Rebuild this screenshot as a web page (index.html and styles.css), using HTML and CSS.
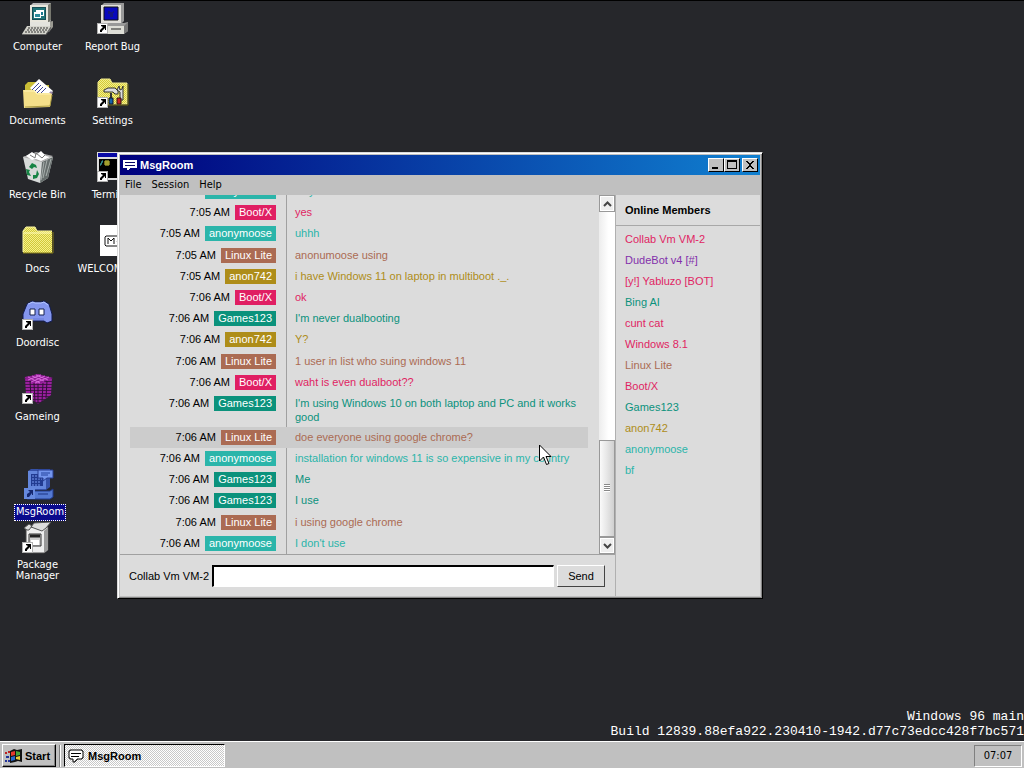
FILE: index.html
```html
<!DOCTYPE html>
<html lang="en">
<head>
<meta charset="utf-8">
<title>Windows 96</title>
<link rel="stylesheet" href="styles.css">
</head>
<body>
<svg class="defs" aria-hidden="true">
  <defs>
    <pattern id="weave" width="2" height="2" patternUnits="userSpaceOnUse"><rect width="2" height="2" fill="#f4f08a"/><path d="M0 0h1v1H0zM1 1h1v1H1z" fill="#d2c838"/></pattern>
    <pattern id="stripe" width="32" height="3" patternUnits="userSpaceOnUse"><rect width="32" height="3" fill="#4a1250"/><path d="M0 0h32v2H0z" fill="#9a1f9e"/></pattern>
    <symbol id="shortcut" viewBox="0 0 11 11"><path d="M0 0h11v11H0z" fill="#fff"/><path d="M0 0h11v11H0zM1 1v9h9V1z" fill="#b0b0b0" fill-rule="evenodd"/><path d="M4 2h5v5H8V5L6 7 5 8v1H3V7l3-3-2-1z" fill="#000"/></symbol>
    <symbol id="bubble" viewBox="0 0 16 14"><path d="M2 1h12v1h1v7h-1v1H9v1H8v1H7v1H5v-3H2V9H1V2h1z" fill="#fff" stroke="#000"/><path d="M3 4h10v1H3zM3 7h8v1H3z" fill="#000"/></symbol>
  </defs>
</svg>
<div class="screen">
  <main class="desktop">
    <nav class="icons" aria-label="Desktop">
      <a class="icon" href="#computer">
        <svg viewBox="0 0 32 32"><path d="M8 3l3-3h18v18l-3 3H8z" fill="#bdbdbd"/><path d="M8 2h18v18H8z" fill="#e8e6dc"/><path d="M26 2l3-2v17l-3 3z" fill="#77786f"/><path d="M10 4h14v13H10z" fill="#174e56"/><path d="M11 5h12v11H11z" fill="#1f7478"/><path d="M14 7h8v6h-8z" fill="#fff"/><path d="M15 9h6v3h-6z" fill="#1a7a90"/><path d="M12 9h7v6h-7z" fill="#fff"/><path d="M13 11h5v3h-5z" fill="#2a8a9a"/><path d="M8 19h18l5-1v6l-4 5H8z" fill="#9a9a92"/><path d="M8 19h20v4H8z" fill="#e3e3dd"/><path d="M5 23h24l-5 8H0z" fill="#d4d4cc"/><path d="M6 25h20M5 27h20M3 29h20" stroke="#343434" stroke-dasharray="2 1"/><path d="M0 31h24l5-8v3l-5 6H0z" fill="#666"/></svg>
        <span>Computer</span></a>
      <a class="icon" href="#documents">
        <svg viewBox="0 0 32 32"><path d="M3 8l3-3h8l2 3h11v17H3z" fill="#c9bd36"/><path d="M8 11l9-9 14 12-9 12z" fill="#fff"/><path d="M10 13l7-7M12 15l7-7M14 17l7-7M17 18l7-7" stroke="#414796"/><path d="M29 14l2 2-4 4v-4z" fill="#98a"/><path d="M1 13h11l3 3h13l2 1-2 13-26 1z" fill="#f4df89"/><path d="M2 14h10l3 3h13" fill="none" stroke="#fff4b5"/><path d="M3 30l25-1 2-11" fill="none" stroke="#ad9d42"/></svg>
        <span>Documents</span></a>
      <a class="icon" href="#recycle">
        <svg viewBox="0 0 32 32"><path d="M1 6l13-4 17 4-5 21-8 5-12-4z" fill="#d7dad9"/><path d="M20 11l11-5-5 21-8 5z" fill="#666d6c"/><path d="M22 11l-3 18M25 9l-4 18M29 8l-5 17" stroke="#a8afad"/><path d="M1 6l13-5 17 4-11 6z" fill="#aaa"/><path d="M4 5l6-4 4 3 5-4 5 5 4 1-9 4-5-2-4 1z" fill="#fff"/><path d="M8 4l5 3 1-5 6 5 3-3" fill="none" stroke="#777"/><path d="M7 16l3-4 4 2 1 3-3-1-2 2zM4 18l4 1-1 2 2 4-4-1zM11 24h3l1-5 2 4-2 4-4 1z" fill="#168344"/></svg>
        <span>Recycle Bin</span></a>
      <a class="icon" href="#docs">
        <svg viewBox="0 0 32 32"><path d="M1 6l3-4h9l2 4h15v22H1z" fill="url(#weave)"/><path d="M1 27V6l3-4h9l2 4h15" fill="none" stroke="#fbf7a5"/><path d="M2 8h27" stroke="#fffbb8"/><path d="M1 28h30V7" fill="none" stroke="#847b1c"/></svg>
        <span>Docs</span></a>
      <a class="icon" href="#doordisc">
        <svg viewBox="0 0 32 32"><path d="M5 5l5-3 3 1h6l3-1 5 3 3 10v7l-5 2-3-2H10l-4 2-5-2v-7z" fill="#8496ee" stroke="#111b50"/><path d="M6 5l5-2 2 1h6l3-1 4 3" fill="none" stroke="#b5c6ff"/><path d="M8 10h5v6H8zM17 10h5v6h-5z" fill="#fff" stroke="#152052"/><path d="M11 20h11" stroke="#6a7cd6"/><use href="#shortcut" y="20" width="11" height="11"/></svg>
        <span>Doordisc</span></a>
      <a class="icon" href="#gameing">
        <svg viewBox="0 0 32 32"><path d="M3 4l13-3 14 4-1 17-13 9L4 22z" fill="url(#stripe)"/><path d="M2 5l14-4 15 4-15 6z" fill="#8d1c92"/><path d="M6 4l12 6M10 3l12 5M14 2l12 5M27 4l-14 6M23 3L9 9M19 2L6 7" stroke="#d668da"/><path d="M16 11v20M12 10l1 19M8 8l1 16M21 10l-1 19M25 8l-1 17" stroke="#2f1035"/><use href="#shortcut" y="20" width="11" height="11"/></svg>
        <span>Gameing</span></a>
      <a class="icon package" href="#package">
        <svg viewBox="0 0 32 32"><path d="M4 5h22v23l-4 3H4z" fill="#eee" stroke="#444"/><path d="M22 9l4-4v23l-4 3z" fill="#999"/><path d="M5 8L2 6l5-4 3 2-3 4zM9 5l3-4 17-1-5 6-4 3z" fill="#ddd" stroke="#555"/><path d="M7 12h12v12H7z" fill="#ccc" stroke="#333"/><path d="M8 14h10" stroke="#222" stroke-width="3"/><path d="M9 18h8v5H9z" fill="#fff"/><use href="#shortcut" y="20" width="11" height="11"/></svg>
        <span>Package Manager</span></a>
      <a class="icon second" href="#bug">
        <svg viewBox="0 0 32 32"><path d="M4 3l3-3h20v18l-3 3H4z" fill="#999"/><path d="M4 2h20v18H4z" fill="#e2e0db"/><path d="M7 4h14v13H7z" fill="#0808bd" stroke="#111"/><path d="M11 8h2v1h3V8h1v2h-1v4h-3v-3h-2z" fill="#151580"/><path d="M3 23l4-3h20l4-1v9l-4 3H3z" fill="#999"/><path d="M3 23h24v8H3z" fill="#deded7"/><path d="M14 26h10" stroke="#222"/><path d="M27 23l4-4v9l-4 3z" fill="#777"/><use href="#shortcut" y="20" width="11" height="11"/></svg>
        <span>Report Bug</span></a>
      <a class="icon second" href="#settings">
        <svg viewBox="0 0 32 32"><path d="M1 5l3-3h9l2 4h15v21H1z" fill="url(#weave)" stroke="#eee88d"/><path d="M2 28h29V7" fill="none" stroke="#6f6817"/><path d="M7 13l4-2h7l3 3v3h-3l-2-2H7zM22 9l-2 4 3 2v8h3V9l-1 3-2 1z" fill="#ddd" stroke="#333"/><path d="M13 16h2v5h-2z" fill="#333"/><path d="M12 21h4v6h-4z" fill="#1762aa" stroke="#112"/><path d="M20 21h4v6h-4z" fill="#c72028" stroke="#311"/><use href="#shortcut" y="20" width="11" height="11"/></svg>
        <span>Settings</span></a>
      <a class="icon second" href="#terminal">
        <svg viewBox="0 0 32 32"><path d="M0 1h32v28H0z" fill="#ddd"/><path d="M1 2h30v4H1z" fill="#0808a5"/><path d="M2 8h29v19H2z" fill="#000"/><path d="M3 14h1v-2h1v-2h1" fill="none" stroke="#4bb"/><path d="M9 9v6M11 9v6M7 11h6M7 13h6" stroke="#d8d43f"/><use href="#shortcut" y="20" width="11" height="11"/></svg>
        <span>Terminal</span></a>
      <a class="icon second" href="#welcome">
        <svg viewBox="0 0 32 32"><path d="M3 0h26v31H3z" fill="#fff"/><path d="M9 11h18v10H9l-1-1v-8z" fill="#fff" stroke="#111"/><path d="M11 19v-6l3 3 3-3v6M22 13v6M20 16l2 3 2-3" fill="none" stroke="#111"/></svg>
        <span>WELCOME.md</span></a>
    </nav>

    <a class="icon selected" href="#msgroom">
      <svg viewBox="0 0 32 32"><path d="M4 3l3-2h19v18l-4 3H4z" fill="#3551a8"/><path d="M4 3h18v18H4z" fill="#6386dc"/><path d="M7 6h12v12H7z" fill="#213b91"/><path d="M8 8h9M8 11h10M8 14h8M8 17h9" stroke="#7a9cf1" stroke-dasharray="2 1"/><path d="M14 2h15v8h-6l-4 3v-3h-5z" fill="#7395ed" stroke="#283f91"/><path d="M17 5h9M17 7h7" stroke="#24429d"/><path d="M4 23h22l3-2v8l-3 2H3z" fill="#5479d2" stroke="#203b8d"/><path d="M14 26h10" stroke="#1d3583"/><path d="M0 20h11v11H0z" fill="#6689de"/><path d="M4 22h5v5H8v-2l-3 4H3v-3l3-2z" fill="#15276e"/></svg>
      <span>MsgRoom</span></a>

    <section class="window" aria-label="MsgRoom">
      <header class="titlebar">
        <svg class="bubble" viewBox="0 0 14 12"><path d="M0 1h14v8H7v1H6v1H4V9H0z" fill="#fff"/><path d="M2 3h10v1H2zM2 6h10v1H2z" fill="#0a0a66"/></svg>
        <h1>MsgRoom</h1>
        <button class="tool" aria-label="Minimize"><svg viewBox="0 0 14 12"><path d="M3 8h6v2H3z"/></svg></button>
        <button class="tool" aria-label="Maximize"><svg viewBox="0 0 14 12"><path d="M2 1h10v9H2zM3 3v6h8V3z" fill-rule="evenodd"/></svg></button>
        <button class="tool close" aria-label="Close"><svg viewBox="0 0 14 12"><path d="M3 2h2v1h1v1h2V3h1V2h2v1h-1v1H9v1H8v2h1v1h1v1h1v1H9V9H8V8H6v1H5v1H3V9h1V8h1V7h1V5H5V4H4V3H3z"/></svg></button>
      </header>
      <nav class="menubar" aria-label="Menu"><button>File</button><button>Session</button><button>Help</button></nav>
      <div class="room">
        <div class="chat">
          <div class="logwrap">
            <div class="log">
              <ol class="messages">
                <li class="aqua"><div class="who"><time>7:05 AM</time><b>anonymoose</b></div><p>why</p></li>
                <li class="rose"><div class="who"><time>7:05 AM</time><b>Boot/X</b></div><p>yes</p></li>
                <li class="aqua"><div class="who"><time>7:05 AM</time><b>anonymoose</b></div><p>uhhh</p></li>
                <li class="clay"><div class="who"><time>7:05 AM</time><b>Linux Lite</b></div><p>anonumoose using</p></li>
                <li class="gold"><div class="who"><time>7:05 AM</time><b>anon742</b></div><p>i have Windows 11 on laptop in multiboot ._.</p></li>
                <li class="rose"><div class="who"><time>7:06 AM</time><b>Boot/X</b></div><p>ok</p></li>
                <li class="green"><div class="who"><time>7:06 AM</time><b>Games123</b></div><p>I'm never dualbooting</p></li>
                <li class="gold"><div class="who"><time>7:06 AM</time><b>anon742</b></div><p>Y?</p></li>
                <li class="clay"><div class="who"><time>7:06 AM</time><b>Linux Lite</b></div><p>1 user in list who suing windows 11</p></li>
                <li class="rose"><div class="who"><time>7:06 AM</time><b>Boot/X</b></div><p>waht is even dualboot??</p></li>
                <li class="green"><div class="who"><time>7:06 AM</time><b>Games123</b></div><p>I'm using Windows 10 on both laptop and PC and it works good</p></li>
                <li class="clay hover"><div class="who"><time>7:06 AM</time><b>Linux Lite</b></div><p>doe everyone using google chrome?</p></li>
                <li class="aqua"><div class="who"><time>7:06 AM</time><b>anonymoose</b></div><p>installation for windows 11 is so expensive in my country</p></li>
                <li class="green"><div class="who"><time>7:06 AM</time><b>Games123</b></div><p>Me</p></li>
                <li class="green"><div class="who"><time>7:06 AM</time><b>Games123</b></div><p>I use</p></li>
                <li class="clay"><div class="who"><time>7:06 AM</time><b>Linux Lite</b></div><p>i using google chrome</p></li>
                <li class="aqua"><div class="who"><time>7:06 AM</time><b>anonymoose</b></div><p>I don't use</p></li>
              </ol>
            </div>
            <div class="scrollbar">
              <button aria-label="Scroll up"><svg viewBox="0 0 9 6"><path d="M1 5l3.500-3.500L8 5"/></svg></button>
              <div class="track"><div class="thumb"><i></i></div></div>
              <button aria-label="Scroll down"><svg viewBox="0 0 9 6"><path d="M1 1l3.500 3.500L8 1"/></svg></button>
            </div>
          </div>
          <form class="composer">
            <label for="message">Collab Vm VM-2</label>
            <input id="message" type="text">
            <button type="button">Send</button>
          </form>
        </div>
        <aside class="members">
          <h2>Online Members</h2>
          <ul>
            <li class="rose">Collab Vm VM-2</li>
            <li class="violet">DudeBot v4 [#]</li>
            <li class="rose">[y!] Yabluzo [BOT]</li>
            <li class="green">Bing AI</li>
            <li class="rose">cunt cat</li>
            <li class="rose">Windows 8.1</li>
            <li class="clay">Linux Lite</li>
            <li class="rose">Boot/X</li>
            <li class="green">Games123</li>
            <li class="gold">anon742</li>
            <li class="aqua">anonymoose</li>
            <li class="aqua">bf</li>
          </ul>
        </aside>
      </div>
    </section>
    <p class="build">Windows 96 main<br>Build 12839.88efa922.230410-1942.d77c73edcc428f7bc571</p>
    <svg class="cursor" viewBox="0 0 13 22" aria-hidden="true"><path d="M.5 1v16l4-4 3 7.500 2.500-1-3-7H12z" fill="#fff" stroke="#000"/></svg>
  </main>
  <footer class="taskbar">
    <button class="start"><svg viewBox="0 0 18 16"><path d="M5 3l4-2 3 1 5-1v13l-4-1-3 1-5 1z" fill="#111"/><path d="M6 4l4-1v4L6 8z" fill="#e7382c"/><path d="M11 3l4 1v3l-4 1z" fill="#48a33c"/><path d="M6 9l4-1v4l-4 1z" fill="#2868cc"/><path d="M11 9l4-1v4l-4-1z" fill="#e8cc38"/><path d="M0 4h2v2H0zM3 3h2v2H3z" fill="#b22"/><path d="M1 8h3v2H1zM0 12h2v2H0zM3 12h2v2H3z" fill="#239"/></svg>Start</button>
    <i class="divider"></i>
    <button class="task"><svg viewBox="0 0 16 14"><use href="#bubble" width="16" height="14"/></svg>MsgRoom</button>
    <time class="clock">07:07</time>
  </footer>
</div>
</body>
</html>
```
FILE: styles.css
```css
* { box-sizing: border-box; }
body { margin: 0; background: #26272b; color: #000; font: 11px/14px "Liberation Sans", Arial, sans-serif; }
h1, h2, p, ul, ol { margin: 0; padding: 0; font-size: inherit; list-style: none; }
button, input { font: inherit; color: inherit; margin: 0; padding: 0; border-radius: 0; }
.defs { position: absolute; width: 0; height: 0; }
.screen { display: flex; flex-direction: column; height: 100vh; overflow: hidden; border-top: 1px solid #000; }
.desktop { position: relative; flex: 1; overflow: hidden; }

.icons { display: grid; grid-template-columns: 75px 75px; grid-template-rows: repeat(8, 74px); }
.icon { display: flex; flex-direction: column; align-items: center; padding-top: 2px; grid-column: 1; color: #fff; text-align: center; text-decoration: none; font: 11px/11px "DejaVu Sans Condensed", "DejaVu Sans", sans-serif; }
.icon svg { width: 32px; height: 32px; flex: none; }
.icon span { margin-top: 6px; }
.icon.second { grid-column: 2; }
.icon:nth-child(1), .icon:nth-child(8) { grid-row: 1; }
.icon:nth-child(2), .icon:nth-child(9) { grid-row: 2; }
.icon:nth-child(3), .icon:nth-child(10) { grid-row: 3; }
.icon:nth-child(4), .icon:nth-child(11) { grid-row: 4; }
.icon.package { grid-row: 8; padding-top: 3px; }
.package span { margin-top: 5px; }
.icon.selected { position: absolute; left: 14px; top: 465px; }
.selected span { margin-top: 4px; padding: 1px 1px 3px; background: #0a0a8c; border: 1px dotted #fff; }

.window { position: absolute; left: 117px; top: 151px; width: 646px; height: 447px; display: flex; flex-direction: column; padding: 1px; border: 1px solid; border-color: #dcdcdc #000 #000 #dcdcdc; background: #c0c0c0; box-shadow: inset 1px 1px #fff, inset -1px -1px #858585; }
.titlebar { display: flex; align-items: center; height: 20px; margin: 1px 1px 0; padding: 0 2px 0 3px; background: linear-gradient(90deg, #00007d, #1080d0); color: #fff; }
.titlebar h1 { flex: 1; margin-left: 3px; font-weight: bold; }
.bubble { width: 14px; height: 12px; }
.tool { display: grid; place-items: center; width: 16px; height: 14px; background: #c0c0c0; border: 1px solid; border-color: #fff #000 #000 #fff; }
.tool svg { width: 14px; height: 12px; }
.tool.close { margin-left: 2px; }
.menubar { display: flex; gap: 10px; height: 20px; padding: 0 6px; }
.menubar button { background: none; border: 0; font: 11px/20px "DejaVu Sans Condensed", "DejaVu Sans", sans-serif; }

.room { flex: 1; display: flex; min-height: 0; margin: 0 1px 1px; background: #dcdcdc; }
.chat { flex: 1; display: flex; flex-direction: column; min-width: 0; }
.logwrap { flex: 1; display: flex; min-height: 0; border-bottom: 1px solid #a0a0a0; }
.log { flex: 1; display: flex; min-width: 0; padding: 0 11px 0 10px; overflow: hidden; }
.messages { flex: 1; display: flex; flex-direction: column; margin-top: -14px; }
.messages li { flex: 1 0 21px; display: flex; }
.who { display: flex; justify-content: flex-end; align-items: flex-start; gap: 5px; width: 157px; padding: 3px 10px 0 0; border-right: 1px solid #a0a0a0; line-height: 15px; }
.who b { padding: 0 4px; color: #fff; font-weight: normal; background: var(--tone); }
.messages p { flex: 1; padding: 3px 0 3px 8px; color: var(--tone); }
.messages .hover { background: #cccccc; }
.hover .who { border-color: #cccccc; }
.rose { --tone: #e01f63; }
.aqua { --tone: #2bb5aa; }
.clay { --tone: #ab6b53; }
.gold { --tone: #ae8d19; }
.green { --tone: #0b927c; }
.violet { --tone: #8330ab; }

.scrollbar { display: flex; flex-direction: column; width: 16px; background: #fafafa; }
.scrollbar button { display: grid; place-items: center; height: 17px; border: 1px solid #999; background: #eee; box-shadow: inset 0 0 0 1px #fff; }
.scrollbar svg { width: 9px; height: 6px; fill: none; stroke: #444; stroke-width: 2; }
.track { flex: 1; display: flex; flex-direction: column; justify-content: flex-end; background: linear-gradient(90deg, #ededed, #fff 60%); }
.thumb { display: grid; place-items: center; height: 30%; border: 1px solid #999; background: linear-gradient(90deg, #fafafa, #e6e6e6 50%, #d0d0d0); }
.thumb i { width: 6px; height: 8px; background: repeating-linear-gradient(#888 0 1px, #fff 1px 2px); }

.composer { display: flex; align-items: center; height: 41px; padding: 0 10px 0 9px; }
.composer input { flex: 1; min-width: 0; height: 22px; margin: 0 3px; padding: 0 4px; border: 1px solid; border-width: 2px 1px 1px 2px; border-color: #000 #fff #fff #000; background: #fff; }
.composer button { width: 48px; height: 22px; background: #dcdcdc; border: 1px solid; border-color: #fff #444 #444 #fff; }

.members { width: 145px; border-left: 1px solid #b0b0b0; }
.members h2 { padding: 8px 9px; border-bottom: 1px solid #a8a8a8; font-weight: bold; }
.members ul { padding: 3px 9px; }
.members li { color: var(--tone); line-height: 21px; }

.build { position: absolute; right: 0; bottom: 2px; color: #fff; text-align: right; font: 13px/15px "Liberation Mono", "Courier New", monospace; }
.cursor { position: absolute; left: 539px; top: 443px; width: 13px; height: 22px; }

.taskbar { display: flex; align-items: center; gap: 3px; height: 27px; padding: 1px 2px 0; border-top: 1px solid #fff; background: #c0c0c0; font-weight: bold; }
.taskbar button { display: flex; align-items: center; height: 23px; font-weight: bold; background: #c0c0c0; border: 1px solid; }
.taskbar .start { gap: 2px; width: 54px; padding-left: 2px; border-color: #fff #000 #000 #fff; box-shadow: inset -1px -1px #808080; }
.start svg { width: 18px; height: 16px; }
.divider { width: 2px; height: 22px; border-left: 1px solid #808080; border-right: 1px solid #fff; }
.taskbar .task { gap: 4px; width: 161px; padding-left: 3px; border-color: #000 #fff #fff #000; background: repeating-conic-gradient(#fff 0 25%, #c8c8c8 0 50%) 0 0 / 2px 2px; }
.task svg { width: 16px; height: 14px; }
.clock { margin-left: auto; width: 48px; border: 1px solid; border-color: #808080 #fff #fff #808080; font: 11px/20px "DejaVu Sans Condensed", "DejaVu Sans", sans-serif; text-align: center; }
```
